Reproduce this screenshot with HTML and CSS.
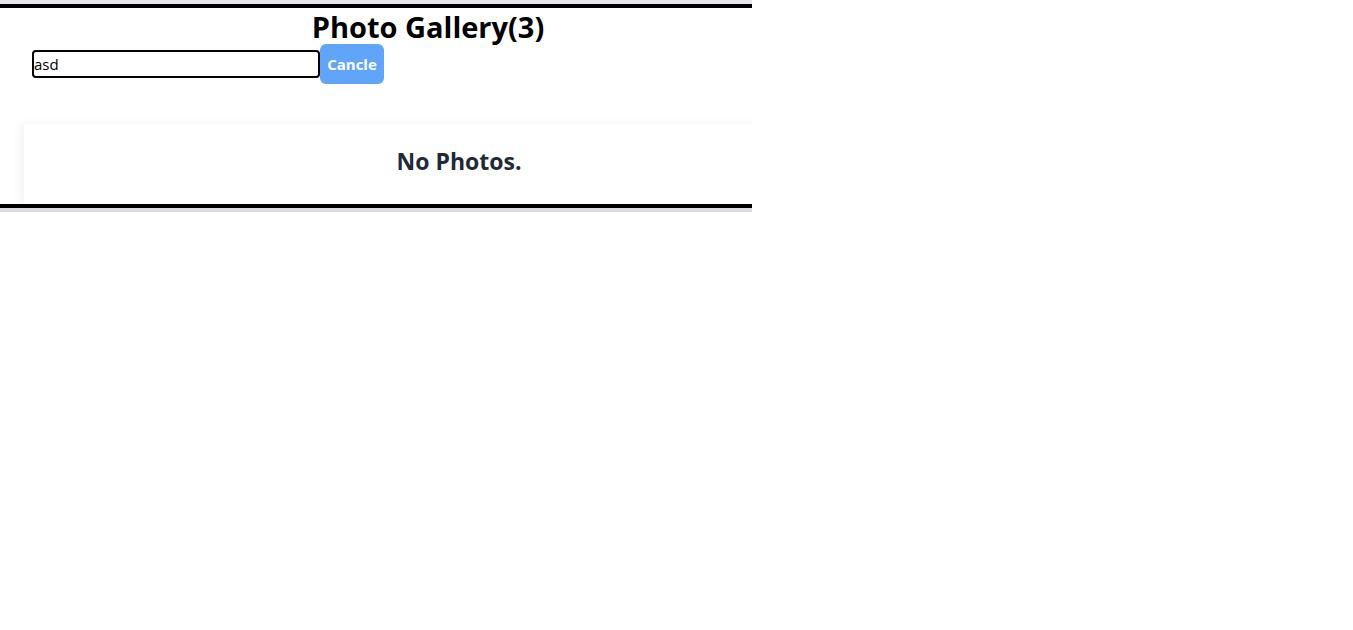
FILE: index.html
```html
<!DOCTYPE html>
<html>
<head>
<meta charset="utf-8">
<link rel="stylesheet" href="styles.css">
</head>
<body>
<div class="frame">
  <div class="gallery">
    <h1 class="title">Photo Gallery(3)</h1>
    <div class="search-row">
      <input class="search-input" type="text" value="asd">
      <button class="cancel-btn">Cancle</button>
    </div>
    <div class="card">
      <h2 class="empty">No Photos.</h2>
    </div>
  </div>
</div>
</body>
</html>
```

FILE: styles.css
```css
html, body {
  margin: 0;
  padding: 0;
  background: #fff;
  font-family: "Open Sans", "Noto Sans", sans-serif;
}

.frame {
  width: 752px;
  border-top: 4px solid #e5e7eb;
  border-bottom: 4px solid #dcdde1;
}

.gallery {
  border-top: 4px solid #000;
  border-bottom: 4px solid #000;
  overflow: hidden;
  background: #fff;
}

.title {
  margin: 0;
  padding-left: 104px;
  text-align: center;
  font-size: 29px;
  line-height: 38px;
  font-weight: 700;
  color: #000;
}

.search-row {
  display: flex;
  align-items: center;
  padding-left: 32px;
  margin-top: -2px;
}

.search-input {
  width: 288px;
  height: 28px;
  box-sizing: border-box;
  border: 2px solid #000;
  border-radius: 4px;
  padding: 0;
  font-family: "Open Sans", "Noto Sans", sans-serif;
  font-size: 15px;
  color: #000;
  outline: none;
}

.cancel-btn {
  width: 64px;
  height: 40px;
  border: none;
  border-radius: 6px;
  background: #60a5fa;
  color: #fff;
  font-family: "Open Sans", "Noto Sans", sans-serif;
  font-weight: 700;
  font-size: 15px;
  padding: 0;
}

.card {
  margin-top: 40px;
  margin-left: 24px;
  width: 870px;
  height: 80px;
  box-sizing: border-box;
  padding-bottom: 6px;
  display: flex;
  align-items: center;
  justify-content: center;
  box-shadow: -4px 0 10px rgba(0, 0, 0, 0.05);
  border-radius: 4px 0 0 4px;
}

.empty {
  margin: 0;
  font-size: 23px;
  font-weight: 700;
  color: #1f2937;
}
```
